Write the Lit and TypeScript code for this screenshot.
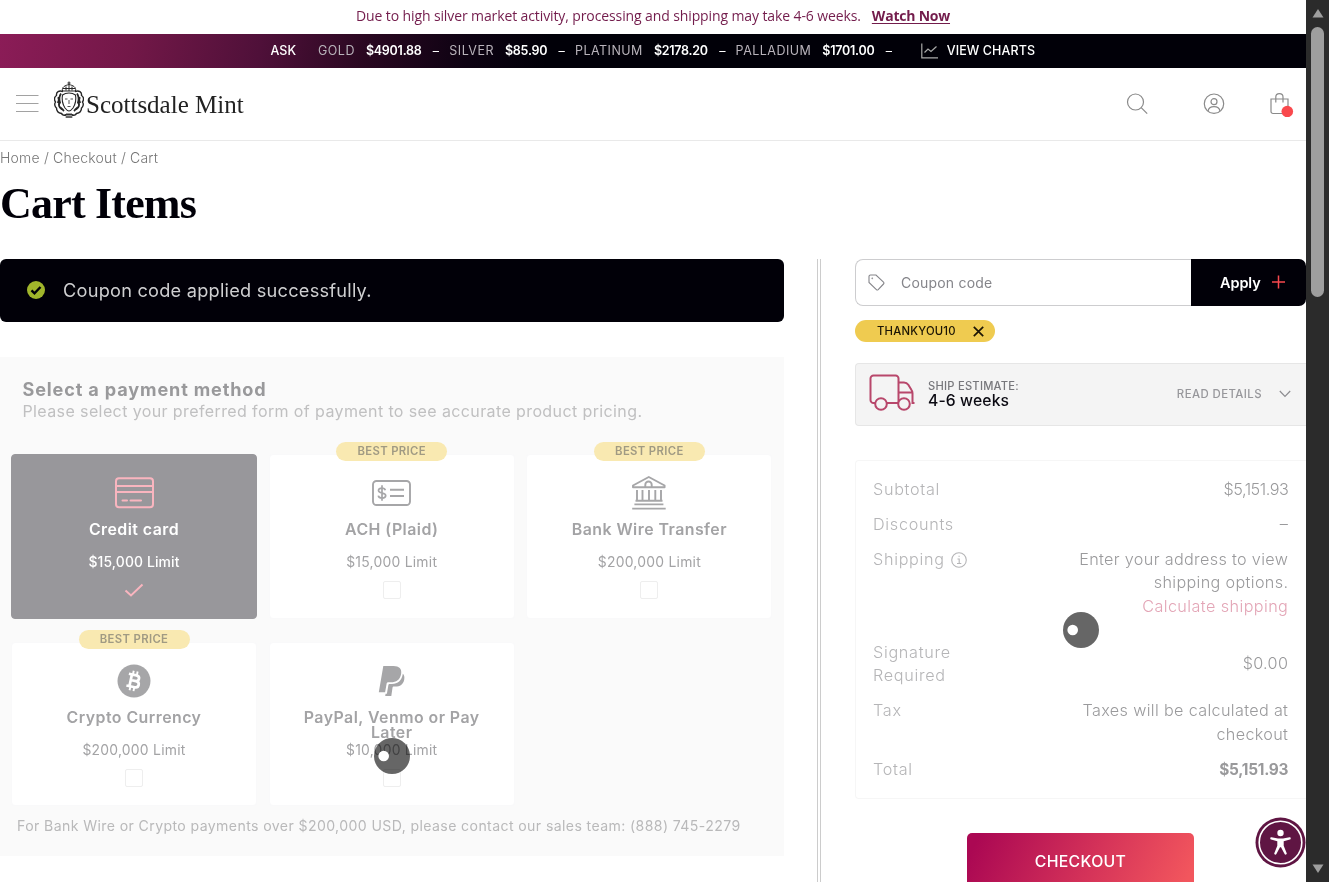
import { LitElement, html, css, svg, nothing } from "lit";
import { customElement } from "lit/decorators.js";
import { classMap } from "lit/directives/class-map.js";

const metals = [
  ["GOLD", "$4901.88"],
  ["SILVER", "$85.90"],
  ["PLATINUM", "$2178.20"],
  ["PALLADIUM", "$1701.00"],
];

const cardIcon = svg`<svg width="39" height="32" viewBox="0 0 39 32" fill="none" stroke="currentColor" stroke-width="2"><rect x="1" y="1.2" width="37" height="29" rx="3"/><path d="M1 8.900h37M1 15h37"/><path d="M7.500 23.500h4.500M15.500 23.500h10.500" stroke-linecap="round"/></svg>`;
const achIcon = svg`<svg width="39" height="28" viewBox="0 0 39 28" fill="none" stroke="currentColor" stroke-width="1.900"><rect x="1" y="2" width="37" height="24" rx="3.500"/><path d="M18 10.800h14M18 17h14"/><path d="M13.300 11.200c-.4-1.400-1.700-2.100-3.400-2.100-2 0-3.400.9-3.400 2.400 0 3.500 7.200 1.500 7.200 5.100 0 1.600-1.500 2.500-3.600 2.500-2 0-3.500-.9-3.800-2.500M10 6.300v15.400" stroke-width="1.700"/></svg>`;
const bankIcon = svg`<svg width="36" height="36" viewBox="0 0 36 36" fill="none" stroke="currentColor" stroke-width="1.900"><path d="M2 12.200v-1.700L17.800 2l15.800 8.500v1.700z" stroke-linejoin="round"/><path d="M14.300 12V9.700a2.600 2.600 0 0 1 6.400 0V12M6 15v10.600M11.500 15v10.600M18 15v10.600M24.300 15v10.600M30 15v10.600M4.500 25.800h27M3.400 29.400h29M1.200 33.600h33.500"/></svg>`;
const btcIcon = svg`<svg width="34" height="34" viewBox="0 0 34 34"><circle cx="17" cy="17" r="16.500" fill="currentColor"/><g transform="rotate(12 17 17)" fill="none" stroke="#fff" stroke-width="2.700"><path d="M10.500 11h7.700c4.300 0 4.300 5.700 0 5.700h-4.700 5.500c4.500 0 4.500 6.300 0 6.300h-8.500M13.600 11v12"/><path d="M14.600 7v4M18.600 7v4M14.600 23v4M18.600 23v4" stroke-width="1.900"/></g></svg>`;
const paypalIcon = svg`<svg width="28" height="32" viewBox="0 0 28 32" fill="currentColor"><path d="M5.300 1h10.200c5.600 0 8.600 2.900 7.600 8-1.100 5.700-4.700 8.300-10.300 8.300h-2.500c-1 0-1.500.5-1.700 1.500l-1.500 8.500H.8z"/><path d="M24.800 8.800c1.500 1.300 1.900 3.300 1.400 5.900-1 4.700-4.200 6.800-8.900 6.800h-1.400c-.8 0-1.300.5-1.400 1.300L13.300 31H7.200l.4-2.300h1.300l1.400-8.300c.1-.9.700-1.400 1.500-1.400h2.200c5.800 0 9.800-3.100 10.800-10.200z"/></svg>`;

const methods = [
  { name: "Credit card", limit: "$15,000 Limit", icon: cardIcon, best: false, on: true },
  { name: "ACH (Plaid)", limit: "$15,000 Limit", icon: achIcon, best: true, on: false },
  { name: "Bank Wire Transfer", limit: "$200,000 Limit", icon: bankIcon, best: true, on: false },
  { name: "Crypto Currency", limit: "$200,000 Limit", icon: btcIcon, best: true, on: false },
  { name: "PayPal, Venmo or Pay Later", limit: "$10,000 Limit", icon: paypalIcon, best: false, on: false, busy: true },
];

@customElement("app-root")
export class AppRoot extends LitElement {
  static styles = css`
    :host { display: block; height: 882px; overflow: hidden; background: #fff; color: #010008; font-family: "Inter", "Liberation Sans", sans-serif; }
    * { box-sizing: border-box; }
    svg { display: block; flex: none; }
    .t { white-space: nowrap; }
    .frame { display: flex; height: 882px; }
    .page { flex: none; width: 1306px; height: 882px; overflow: hidden; position: relative; }
    .scroll { flex: none; width: 23px; background: #2b2b2b; display: flex; flex-direction: column; align-items: center; padding: 9px 0; }
    .thumb { width: 13px; height: 270px; border-radius: 7px; background: #9e9e9e; margin: 9px 0 auto; }

    .notice { height: 34px; display: flex; justify-content: center; align-items: center; gap: 11px; font: 14px/20px "Open Sans", sans-serif; letter-spacing: -0.11px; color: #731c4c; padding-bottom: 3px; }
    .notice b { font-weight: 700; letter-spacing: -0.22px; text-decoration: underline; text-underline-offset: 2px; }

    .ticker { height: 34px; display: flex; align-items: center; padding: 0 0 1px 270.500px; font-size: 12.5px; color: #fff; background: linear-gradient(100deg, #8b1c57 0%, #731848 10%, #4f1039 20%, #2a0821 28%, #0d0212 36%, #010008 42%); }
    .ask { width: 47.500px; font-weight: 500; }
    .metal { display: flex; align-items: center; margin-right: 10.200px; }
    .metal .n { color: #b9b3bb; letter-spacing: 0.48px; margin-right: 11px; }
    .metal .v { font-weight: 600; letter-spacing: -0.25px; margin-right: 11.300px; }
    .chart { margin: 0 8px 0 18.500px; color: #aaa; }
    .charts { font-weight: 500; letter-spacing: 0.1px; }

    .head { height: 73px; border-bottom: 1px solid #e9e9e9; display: flex; align-items: center; padding: 0 12px 1px 16px; color: #8a8a8a; }
    .brand { display: flex; align-items: center; margin-left: 15px; margin-top: -8px; color: #222; }
    .word { font: 25px/30px "Liberation Serif", serif; margin: 11px 0 0 2px; }
    .tools { display: flex; margin-left: auto; align-items: center; }
    .tools .s { margin-right: 55px; }
    .tools .u { margin-right: 44px; }

    .crumbs { font-size: 14px; font-weight: 300; letter-spacing: 0.19px; color: #777; line-height: 20px; margin-top: 7px; }
    h1 { font: 700 44px/54px "Liberation Serif", serif; letter-spacing: -0.8px; margin: 9px 0 0; height: 82px; }

    .cols { display: flex; align-items: flex-start; }
    .left { width: 784px; }
    .alert { height: 63px; border-radius: 6px; background: #010008; display: flex; align-items: center; padding-left: 27px; gap: 18px; color: #cfcfd1; font-size: 18.200px; letter-spacing: 0.23px; }
    .alert .t { padding-bottom: 2px; }
    .alert svg { margin-bottom: 1px; }
    .panel { margin-top: 35px; height: 499px; background: #fafafa; color: #a6a6a8; padding-top: 20px; }
    .panel h2 { margin: 0 0 0 22.500px; font-size: 18.100px; letter-spacing: 0.85px; font-weight: 700; line-height: 24px; color: #99999b; }
    .sub { margin-left: 22.500px; font-size: 16px; letter-spacing: 0.39px; line-height: 21px; color: #c0c0c1; }
    .grid { display: grid; grid-template-columns: repeat(3, 246px); column-gap: 11.700px; row-gap: 23px; padding: 32px 0 0 11px; }
    .pay { height: 164.500px; display: flex; flex-direction: column; align-items: center; position: relative; background: #fff; border: 1.500px solid #f9f9fa; border-radius: 4px; padding-top: 19px; text-align: center; }
    .pay.on { background: #98979b; border-color: #98979b; color: #fff; }
    .ico { height: 38px; display: flex; align-items: center; }
    .on .ico, .on .tick { color: #f9b5bf; }
    .name { font-size: 15.900px; letter-spacing: 0.46px; font-weight: 600; line-height: 15px; height: 37px; margin-top: 10px; width: 200px; color: #a3a3a5; }
    .name .t { white-space: normal; }
    .limit { font-size: 13.900px; letter-spacing: 0.25px; line-height: 16px; margin-top: -5px; color: #a3a3a5; }
    .on .name, .on .limit { color: #fff; }
    .on .limit { font-weight: 500; letter-spacing: 0.14px; }
    .box { width: 18px; height: 18px; border: 1.500px solid #eee; border-radius: 2px; margin-top: 11px; background: #fff; }
    .tick { margin-top: 13px; }
    .best { position: absolute; top: -13px; width: 111px; height: 19px; border-radius: 10px; background: #f9e9b1; font-size: 11.300px; letter-spacing: 0.37px; font-weight: 600; line-height: 19px; color: #a09a83; }
    .contact { margin: 10px 0 0 17px; font-size: 14.100px; letter-spacing: 0.39px; line-height: 20px; color: #b9b9ba; }
    .spin { position: absolute; mix-blend-mode: multiply; }
    .dot { position: absolute; }
    .pay .spin, .pay .dot { left: 104px; top: 95px; }

    .divider { width: 4px; height: 640px; margin-left: 33px; border-left: 1px solid #ccc; border-right: 1px solid #ccc; }
    .right { width: 451px; margin-left: 34px; }
    .coupon { display: flex; height: 47px; }
    .field { width: 336px; border: 1px solid #cdcdcf; border-right: 0; border-radius: 8px 0 0 8px; display: flex; align-items: center; padding-left: 12px; gap: 16px; font-size: 14px; letter-spacing: 0.2px; color: #85858a; }
    .apply { width: 115px; background: #010008; color: #fff; border-radius: 0 7px 7px 0; display: flex; align-items: center; padding: 0 0 1px 29px; gap: 11px; font-size: 14.500px; letter-spacing: -0.1px; font-weight: 600; }
    .chip { width: 140px; height: 22px; margin-top: 14px; border-radius: 11px; background: #efcb50; display: flex; align-items: center; justify-content: space-between; padding: 0 11px 0 22px; font-size: 11.300px; letter-spacing: 0.22px; font-weight: 500; color: #1d1605; }
    .ship { height: 63px; margin-top: 21px; background: #f4f4f4; border: 1px solid #e6e6e6; border-right: 0; border-radius: 4px 0 0 4px; display: flex; align-items: center; padding: 0 15px 2px 13px; }
    .truck { margin-bottom: 4px; }
    .est { margin: 0 0 1px 13px; display: flex; flex-direction: column; }
    .est .k { font-size: 11.200px; letter-spacing: 0.23px; line-height: 14px; color: #77777b; font-weight: 500; }
    .est .d { font-size: 15.700px; letter-spacing: 0.12px; line-height: 15px; font-weight: 500; color: #0b0a12; }
    .read { margin-left: auto; font-size: 11.400px; letter-spacing: 0.42px; font-weight: 500; color: #97979b; margin-right: 17px; }
    .sum { position: relative; margin-top: 34px; height: 339px; border: 1.500px solid #f6f6f6; border-right: 0; border-radius: 4px 0 0 4px; padding: 17px 18px 0 17px; display: flex; flex-direction: column; gap: 11.300px; font-size: 16.200px; font-weight: 300; line-height: 23.600px; }
    .row { display: flex; justify-content: space-between; align-items: center; color: #a9a9ab; }
    .row.top { align-items: flex-start; }
    .row.ship3 { height: 81.500px; }
    .row > .lab { color: #b5b5b7; display: flex; flex-direction: column; letter-spacing: 0.7px; }
    .row > .lab.i { flex-direction: row; align-items: center; gap: 6px; }
    .row > .val { display: flex; flex-direction: column; align-items: flex-end; color: #9a9a9c; letter-spacing: 0.34px; margin-right: -0.300px; }
    .row .num { letter-spacing: -0.45px; }
    .row .link { color: #e3a5b6; letter-spacing: 0.42px; }
    .row .tot { font-size: 15.400px; font-weight: 700; color: #99999b; letter-spacing: -0.25px; }
    .sum .spin, .sum .dot { left: 207px; top: 151px; }
    .checkout { width: 227px; height: 60px; margin: 34px 0 0 112px; border-radius: 5px; background: linear-gradient(115deg, #ab0853 5%, #d53359 55%, #f2565d 95%); color: #fff; font-size: 15.800px; letter-spacing: 0.33px; font-weight: 500; line-height: 57px; text-align: center; }
    .a11y { position: absolute; left: 1255px; top: 817px; }
  `;

  spinner() {
    return html`<svg class="spin" width="36" height="36" viewBox="0 0 36 36"><circle cx="18" cy="18" r="18" fill="#666"/></svg>
      <svg class="dot" width="36" height="36" viewBox="0 0 36 36"><circle cx="9.700" cy="18" r="5.300" fill="#fff"/></svg>`;
  }

  payCard(m: any) {
    return html`<div class=${classMap({ pay: true, on: m.on })}>
      ${m.best ? html`<div class="best"><span class="t">BEST PRICE</span></div>` : nothing}
      <div class="ico">${m.icon}</div>
      <div class="name"><span class="t">${m.name}</span></div>
      <div class="limit"><span class="t">${m.limit}</span></div>
      ${m.on
        ? html`<svg class="tick" width="20" height="15" viewBox="0 0 20 15" fill="none" stroke="currentColor" stroke-width="2"><path d="M1.500 7.500l5.500 5L18.500 1.500"/></svg>`
        : html`<div class="box"></div>`}
      ${m.busy ? this.spinner() : nothing}
    </div>`;
  }

  render() {
    return html`<div class="frame">
      <div class="page">
        <div class="notice"><span class="t">Due to high silver market activity, processing and shipping may take 4-6 weeks.</span><b class="t">Watch Now</b></div>
        <div class="ticker">
          <div class="ask"><span class="t">ASK</span></div>
          ${metals.map(([n, v]) => html`<div class="metal"><span class="t n">${n}</span><span class="t v">${v}</span><span>–</span></div>`)}
          <svg class="chart" width="18" height="16" viewBox="0 0 18 16" fill="none" stroke="currentColor" stroke-width="1.200"><path d="M.8.5v14.300H17"/><path d="M3.500 9.500L7 6l3 2.500L15.500 3.500" /></svg>
          <span class="t charts">VIEW CHARTS</span>
        </div>
        <div class="head">
          <svg width="23" height="20" viewBox="0 0 23 20" stroke="#a2a2a2" stroke-width="1"><path d="M0 1.500h22.500M0 9.500h22.500M0 17.500h22.500"/></svg>
          <div class="brand">
            <svg width="30" height="38" viewBox="0 0 30 38" fill="none" stroke="#262626" stroke-width="1">
              <path d="M15 .5v3M13.500 2h3M8.500 10c-1-4 2.500-5.500 6.500-6.500 4 1 7.500 2.500 6.500 6.500M9 7.500h12M8.500 10h13M12 5.500v4M15 4v6M18 5.500v4"/>
              <path d="M9 10.500C5 9 2 11 2.500 14.500 0 16 0 19 1.500 21c-1.500 2-.5 5 1 6 0 3 2 5 5 5.500 1 1.500 3 2.500 4.500 1.500M21 10.500c4-1.500 7 .5 6.500 4 2.500 1.500 2.500 4.500 1 6.500 1.500 2 .5 5-1 6 0 3-2 5-5 5.500-1 1.500-3 2.500-4.500 1.500" stroke-width="1.400"/>
              <path d="M7 12.500c-2 3-2 6-1 9-2 2-1 5 2 7M23 12.500c2 3 2 6 1 9 2 2 1 5-2 7M4.200 16c1 2 1 4-.5 6M25.800 16c-1 2-1 4 .5 6M5 26c2 0 3 2 5 4M25 26c-2 0-3 2-5 4" stroke-width="1.800"/>
              <path d="M8.500 14c-1 5 0 9 2.500 13 1.500 2 2.500 3 4 3s2.500-1 4-3c2.500-4 3.500-8 2.500-13-2-1.500-4-2-6.500-2s-4.500.5-6.500 2z" stroke-width="1.100"/>
              <path d="M11 18h2.500M16.500 18H19M15 19v4M13.500 25.500h3" stroke-width=".8"/>
              <path d="M10.500 33.500h9M11.500 36h7M13 32v5M17 32v5M15 32v5" stroke-width=".9"/>
            </svg>
            <span class="t word">Scottsdale Mint</span>
          </div>
          <div class="tools">
            <svg class="s" width="22" height="22" viewBox="0 0 22 22" fill="none" stroke="currentColor" stroke-width="1.200"><circle cx="9.500" cy="9" r="8"/><path d="M15.200 14.700l6 6"/></svg>
            <svg class="u" width="22" height="22" viewBox="0 0 22 22" fill="none" stroke="currentColor" stroke-width="1.200"><circle cx="11" cy="10.700" r="9.700"/><circle cx="11" cy="8.700" r="3"/><path d="M5 18.200c.5-3 2.500-4.500 6-4.500s5.500 1.500 6 4.500"/></svg>
            <svg width="25" height="26" viewBox="0 0 25 26" fill="none" stroke="currentColor" stroke-width="1.200"><path d="M2 8h17v12.500a2 2 0 0 1-2 2H4a2 2 0 0 1-2-2z"/><path d="M6.800 11.500V6c0-4.500 7.200-4.500 7.200 0v5.500"/><circle cx="18.300" cy="20.500" r="5.800" fill="#f9494d" stroke="none"/></svg>
          </div>
        </div>
        <div class="crumbs"><span class="t">Home / Checkout / Cart</span></div>
        <h1><span class="t">Cart Items</span></h1>
        <div class="cols">
          <div class="left">
            <div class="alert">
              <svg width="18" height="18" viewBox="0 0 18 18"><circle cx="9" cy="9" r="9" fill="#a0b52b"/><path d="M4.500 9.300l3 3 6-6.300" fill="none" stroke="#010008" stroke-width="2.400"/></svg>
              <span class="t">Coupon code applied successfully.</span>
            </div>
            <div class="panel">
              <h2><span class="t">Select a payment method</span></h2>
              <div class="sub"><span class="t">Please select your preferred form of payment to see accurate product pricing.</span></div>
              <div class="grid">${methods.map((m) => this.payCard(m))}</div>
              <div class="contact"><span class="t">For Bank Wire or Crypto payments over $200,000 USD, please contact our sales team: (888) 745-2279</span></div>
            </div>
          </div>
          <div class="divider"></div>
          <div class="right">
            <div class="coupon">
              <div class="field">
                <svg width="17" height="17" viewBox="0 0 17 17" fill="none" stroke="currentColor" stroke-width="1.100"><path d="M1 2.500A1.500 1.500 0 0 1 2.500 1H8l7.500 7.200a1.300 1.300 0 0 1 0 1.800l-5.300 5.600a1.300 1.300 0 0 1-1.800 0L1 8.500z"/><circle cx="4.300" cy="4.300" r=".3"/></svg>
                <span class="t">Coupon code</span>
              </div>
              <div class="apply"><span class="t">Apply</span><svg width="14" height="14" viewBox="0 0 14 14" stroke="#f8484e" stroke-width="1.500"><path d="M6.500 .5v13M0 7h13"/></svg></div>
            </div>
            <div class="chip"><span class="t">THANKYOU10</span><svg width="11" height="11" viewBox="0 0 11 11" stroke="#1d1605" stroke-width="1.700"><path d="M.8.8l9.400 9.400M10.200.8L.8 10.200"/></svg></div>
            <div class="ship">
              <svg class="truck" width="46" height="40" viewBox="0 0 46 40" fill="none" stroke="#b8476b" stroke-width="2"><path d="M6.500 31H4.500a3 3 0 0 1-3-3V6.500a3 3 0 0 1 3-3h22a3 3 0 0 1 3 3V31H18"/><path d="M29.500 10.500h5.500c2 0 3.300.8 4.300 2.300l3.200 5.200c.8 1.200 1 2 1 3.300V31h2M30 20.500h13M29.500 31h-1"/><circle cx="12" cy="32" r="5.800" fill="#f4f4f4"/><circle cx="35" cy="32" r="5.800" fill="#f4f4f4"/></svg>
              <div class="est"><span class="t k">SHIP ESTIMATE:</span><span class="t d">4-6 weeks</span></div>
              <span class="t read">READ DETAILS</span>
              <svg width="12" height="8" viewBox="0 0 12 8" fill="none" stroke="#8c8c90" stroke-width="1.200"><path d="M.8 1L6 6.500 11.200 1"/></svg>
            </div>
            <div class="sum">
              <div class="row"><div class="lab"><span class="t">Subtotal</span></div><div class="val"><span class="t num">$5,151.93</span></div></div>
              <div class="row"><div class="lab"><span class="t">Discounts</span></div><div class="val"><span>–</span></div></div>
              <div class="row top ship3"><div class="lab i"><span class="t">Shipping</span><svg width="16" height="16" viewBox="0 0 16 16" fill="none" stroke="currentColor" stroke-width="1.100"><circle cx="8" cy="8" r="7.300"/><path d="M6.500 7H8.200v4.500M6 11.500h4.300M7.500 4.300h1.200"/></svg></div>
                <div class="val"><span class="t">Enter your address to view</span><span class="t">shipping options.</span><span class="t link">Calculate shipping</span></div></div>
              <div class="row"><div class="lab"><span class="t">Signature</span><span class="t">Required</span></div><div class="val"><span class="t">$0.00</span></div></div>
              <div class="row top"><div class="lab"><span class="t">Tax</span></div><div class="val"><span class="t">Taxes will be calculated at</span><span class="t">checkout</span></div></div>
              <div class="row"><div class="lab"><span class="t">Total</span></div><div class="val"><span class="t tot">$5,151.93</span></div></div>
              ${this.spinner()}
            </div>
            <div class="checkout"><span class="t">CHECKOUT</span></div>
          </div>
        </div>
        <svg class="a11y" width="51" height="51" viewBox="0 0 51 51"><circle cx="25.500" cy="25.500" r="25" fill="#5f1543"/><circle cx="25.500" cy="25.500" r="21.300" fill="none" stroke="#fff" stroke-width="1.600"/><g fill="#fff"><circle cx="25.500" cy="16" r="3.200"/><path d="M16.500 20.300l6.500 1.200h5l6.500-1.200c1.400-.2 1.700 1.800.4 2.200l-6.200 1.700v4.500l3 7.500c.5 1.300-1.500 2.100-2.100.9l-3.600-6.800h-1l-3.600 6.800c-.6 1.200-2.600.4-2.100-.9l3-7.500v-4.500l-6.200-1.700c-1.300-.4-1-2.400.4-2.200z"/></g></svg>
      </div>
      <div class="scroll">
        <svg width="12" height="9" viewBox="0 0 12 9"><path d="M6 0l5.500 8.500H.5z" fill="#9e9e9e"/></svg>
        <div class="thumb"></div>
        <svg width="12" height="9" viewBox="0 0 12 9"><path d="M6 9L.5.500h11z" fill="#9e9e9e"/></svg>
      </div>
    </div>`;
  }
}
